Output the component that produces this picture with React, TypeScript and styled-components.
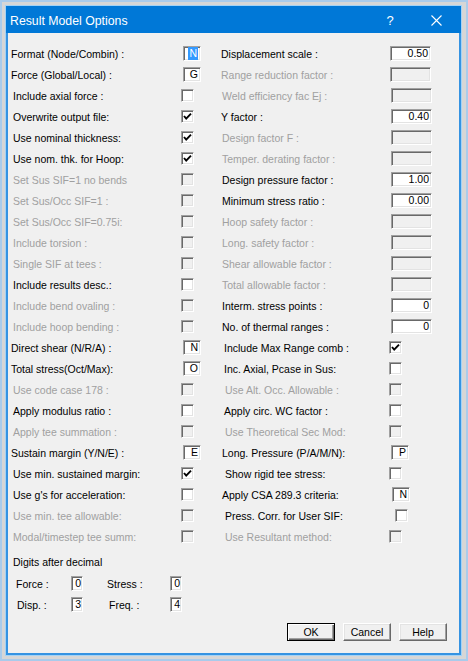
import React from 'react';
import styled, { createGlobalStyle } from 'styled-components';

const GlobalStyle = createGlobalStyle`
    html, body {
        margin: 0;
        height: 100%;
    }
    #root {
        height: 100%;
    }
    * {
        box-sizing: border-box;
    }
`;

type Item =
    | { kind: 'field'; label: string; value?: string; wide?: boolean; off?: boolean; sel?: boolean; indent?: number; shift?: number }
    | { kind: 'check'; label: string; checked?: boolean; off?: boolean; indent?: number; shift?: number };

const leftRows: Item[] = [
    { kind: 'field', label: 'Format (Node/Combin) :', value: 'N', sel: true },
    { kind: 'field', label: 'Force (Global/Local) :', value: 'G' },
    { kind: 'check', label: 'Include axial force :' },
    { kind: 'check', label: 'Overwrite output file:', checked: true },
    { kind: 'check', label: 'Use nominal thickness:', checked: true },
    { kind: 'check', label: 'Use nom. thk. for Hoop:', checked: true },
    { kind: 'check', label: 'Set Sus SIF=1 no bends', off: true },
    { kind: 'check', label: 'Set Sus/Occ SIF=1 :', off: true },
    { kind: 'check', label: 'Set Sus/Occ SIF=0.75i:', off: true },
    { kind: 'check', label: 'Include torsion :', off: true },
    { kind: 'check', label: 'Single SIF at tees :', off: true },
    { kind: 'check', label: 'Include results desc.:' },
    { kind: 'check', label: 'Include bend ovaling :', off: true },
    { kind: 'check', label: 'Include hoop bending :', off: true },
    { kind: 'field', label: 'Direct shear (N/R/A) :', value: 'N' },
    { kind: 'field', label: 'Total stress(Oct/Max):', value: 'O' },
    { kind: 'check', label: 'Use code case 178 :', off: true },
    { kind: 'check', label: 'Apply modulus ratio :' },
    { kind: 'check', label: 'Apply tee summation :', off: true },
    { kind: 'field', label: 'Sustain margin (Y/N/E) :', value: 'E' },
    { kind: 'check', label: 'Use min. sustained margin:', checked: true },
    { kind: 'check', label: "Use g's for acceleration:" },
    { kind: 'check', label: 'Use min. tee allowable:', off: true },
    { kind: 'check', label: 'Modal/timestep tee summ:', off: true },
];

const rightRows: Item[] = [
    { kind: 'field', label: 'Displacement scale :', value: '0.50', wide: true, indent: 0, shift: 1 },
    { kind: 'field', label: 'Range reduction factor :', wide: true, off: true, indent: 0, shift: 1 },
    { kind: 'field', label: 'Weld efficiency fac Ej :', wide: true, off: true, indent: 1, shift: 2 },
    { kind: 'field', label: 'Y factor :', value: '0.40', wide: true, indent: 0, shift: 2 },
    { kind: 'field', label: 'Design factor F :', wide: true, off: true },
    { kind: 'field', label: 'Temper. derating factor :', wide: true, off: true },
    { kind: 'field', label: 'Design pressure factor :', value: '1.00', wide: true },
    { kind: 'field', label: 'Minimum stress ratio :', value: '0.00', wide: true },
    { kind: 'field', label: 'Hoop safety factor :', wide: true, off: true },
    { kind: 'field', label: 'Long. safety factor :', wide: true, off: true },
    { kind: 'field', label: 'Shear allowable factor :', wide: true, off: true },
    { kind: 'field', label: 'Total allowable factor :', wide: true, off: true },
    { kind: 'field', label: 'Interm. stress points :', value: '0', wide: true },
    { kind: 'field', label: 'No. of thermal ranges :', value: '0', wide: true },
    { kind: 'check', label: 'Include Max Range comb :', checked: true, indent: 3 },
    { kind: 'check', label: 'Inc. Axial, Pcase in Sus:', indent: 3 },
    { kind: 'check', label: 'Use Alt. Occ. Allowable :', off: true, indent: 4 },
    { kind: 'check', label: 'Apply circ. WC factor :', indent: 3 },
    { kind: 'check', label: 'Use Theoretical Sec Mod:', off: true, indent: 4 },
    { kind: 'field', label: 'Long. Pressure (P/A/M/N):', value: 'P', indent: 1, shift: 2 },
    { kind: 'check', label: 'Show rigid tee stress:', indent: 4 },
    { kind: 'field', label: 'Apply CSA 289.3 criteria:', value: 'N', indent: 1, shift: 3 },
    { kind: 'check', label: 'Press. Corr. for User SIF:', indent: 4, shift: 6 },
    { kind: 'check', label: 'Use Resultant method:', off: true, indent: 4 },
];

const Screen = styled.div`
    height: 100%;
    padding: 2px;
    background: #a9cbeb;
    font-family: "Liberation Sans", Arial, sans-serif;
`;

const Edge = styled.div`
    height: 100%;
    border-style: solid;
    border-color: #d6d6d6;
    border-width: 3px 4px 3px 3px;
`;

const Ring = styled.div`
    height: 100%;
    border: 1px solid #a3d2f5;
`;

const Window = styled.div`
    height: 100%;
    display: flex;
    flex-direction: column;
    border: 2px solid #3593e2;
    background: #f0f0f0;
`;

const TitleBar = styled.div`
    flex: none;
    display: flex;
    align-items: center;
    height: 27px;
    margin: -2px -2px 0 -2px;
    padding: 2px 2px 0 4px;
    background: #0078d7;
    color: #fff;
`;

const Title = styled.span`
    font-size: 12.3px;
    flex: 1;
`;

const TitleButton = styled.span`
    width: 46px;
    height: 25px;
    display: flex;
    align-items: center;
    justify-content: center;
    font-size: 13px;
`;

const Body = styled.div`
    flex: 1;
    display: flex;
    flex-direction: column;
    padding: 10px 10px 0 3px;
    font-size: 10.5px;
    color: #000;
`;

const Columns = styled.div`
    display: grid;
    grid-template-columns: 210px 1fr;
    grid-template-rows: repeat(24, 21px);
    grid-auto-flow: column;
`;

const Row = styled.div`
    display: flex;
    align-items: center;
    height: 21px;
`;

const Label = styled.span<{ $w: number; $indent: number; $off?: boolean }>`
    flex: none;
    width: ${p => p.$w}px;
    padding-left: ${p => p.$indent}px;
    color: ${p => (p.$off ? '#a0a0a0' : '#000')};
    white-space: nowrap;
`;

const Field = styled.span<{ $w: number; $off?: boolean; $shift?: number }>`
    flex: none;
    display: flex;
    align-items: center;
    justify-content: flex-end;
    width: ${p => p.$w}px;
    height: 15px;
    margin-left: ${p => p.$shift ?? 0}px;
    padding-right: 2px;
    border: 1px solid;
    border-color: #a0a0a0 #ffffff #ffffff #a0a0a0;
    box-shadow: inset 1px 1px #696969, inset -1px -1px #e3e3e3;
    background: ${p => (p.$off ? '#f0f0f0' : '#ffffff')};
    line-height: 13px;
`;

const Sel = styled.span`
    display: inline-block;
    height: 13px;
    padding: 0 1px;
    background: #3399ff;
    color: #fff;
`;

const Box = styled.span<{ $off?: boolean; $shift?: number }>`
    flex: none;
    display: flex;
    align-items: center;
    justify-content: center;
    width: 13px;
    height: 13px;
    margin-left: ${p => p.$shift ?? 0}px;
    border: 1px solid;
    border-color: #a0a0a0 #ffffff #ffffff #a0a0a0;
    box-shadow: inset 1px 1px #696969, inset -1px -1px #e3e3e3;
    background: ${p => (p.$off ? '#f0f0f0' : '#ffffff')};
`;

const Digits = styled.div`
    margin-top: 5px;
`;

const DigitsTitle = styled.div`
    height: 21px;
    line-height: 21px;
    padding-left: 2px;
`;

const DigitRow = styled.div`
    display: grid;
    grid-template-columns: 55px 12px 24px 63px 12px;
    align-items: center;
    height: 21px;
    padding-left: 5px;
`;

const DigitLabel = styled.span<{ $indent?: number }>`
    padding-left: ${p => p.$indent ?? 0}px;
`;

const DigitBox = styled(Field)`
    width: 12px;
    padding-right: 1px;
`;

const Buttons = styled.div`
    display: flex;
    justify-content: flex-end;
    gap: 8px;
    margin-top: 8px;
    padding-right: 2px;
`;

const Button = styled.span<{ $default?: boolean }>`
    width: 48px;
    height: 18px;
    display: flex;
    align-items: center;
    justify-content: center;
    background: #f0f0f0;
    border: 1px solid;
    border-color: ${p => (p.$default ? '#000 #000 #000 #000' : '#ffffff #696969 #696969 #ffffff')};
    box-shadow: ${p =>
        p.$default
            ? 'inset 1px 1px #ffffff, inset -1px -1px #696969, inset -2px -2px #a0a0a0'
            : 'inset -1px -1px #a0a0a0, inset 1px 1px #e3e3e3'};
`;

const Check = () => (
    <svg width="9" height="9" viewBox="0 0 9 9">
        <polyline points="1,4 3.2,6.6 8,1.6" fill="none" stroke="#000" strokeWidth="1.9" />
    </svg>
);

const CloseIcon = () => (
    <svg width="11" height="11" viewBox="0 0 11 11">
        <path d="M0.5 0.5 L10.5 10.5 M10.5 0.5 L0.5 10.5" stroke="#fff" strokeWidth="1.1" />
    </svg>
);

const renderItem = (it: Item, side: 'left' | 'right', key: string) => {
    const labelW = side === 'left' ? 170 : 168;
    if (it.kind === 'field') {
        const indent = it.indent ?? (side === 'left' ? 0 : 1);
        const shift = it.shift ?? 2;
        return (
            <Row key={key}>
                <Label $w={labelW} $indent={indent} $off={it.off}>{it.label}</Label>
                <Field $w={it.wide ? 41 : 18} $off={it.off} $shift={shift}>
                    {it.sel ? <Sel>{it.value}</Sel> : it.value}
                </Field>
            </Row>
        );
    }
    return (
        <Row key={key}>
            <Label $w={labelW} $indent={it.indent ?? 2} $off={it.off}>{it.label}</Label>
            <Box $off={it.off} $shift={it.shift}>{it.checked && <Check />}</Box>
        </Row>
    );
};

const App: React.FC = () => {
    return (
        <Screen>
            <GlobalStyle />
            <Edge>
                <Ring>
                    <Window>
                        <TitleBar>
                            <Title>Result Model Options</Title>
                            <TitleButton>?</TitleButton>
                            <TitleButton><CloseIcon /></TitleButton>
                        </TitleBar>
                        <Body>
                            <Columns>
                                {leftRows.map((it, i) => renderItem(it, 'left', 'l' + i))}
                                {rightRows.map((it, i) => renderItem(it, 'right', 'r' + i))}
                            </Columns>
                            <Digits>
                                <DigitsTitle>Digits after decimal</DigitsTitle>
                                <DigitRow>
                                    <DigitLabel>Force :</DigitLabel>
                                    <DigitBox $w={12}>0</DigitBox>
                                    <span />
                                    <DigitLabel>Stress :</DigitLabel>
                                    <DigitBox $w={12}>0</DigitBox>
                                </DigitRow>
                                <DigitRow>
                                    <DigitLabel $indent={1}>Disp. :</DigitLabel>
                                    <DigitBox $w={12}>3</DigitBox>
                                    <span />
                                    <DigitLabel $indent={2}>Freq. :</DigitLabel>
                                    <DigitBox $w={12}>4</DigitBox>
                                </DigitRow>
                            </Digits>
                            <Buttons>
                                <Button $default>OK</Button>
                                <Button>Cancel</Button>
                                <Button>Help</Button>
                            </Buttons>
                        </Body>
                    </Window>
                </Ring>
            </Edge>
        </Screen>
    );
};

export default App;
